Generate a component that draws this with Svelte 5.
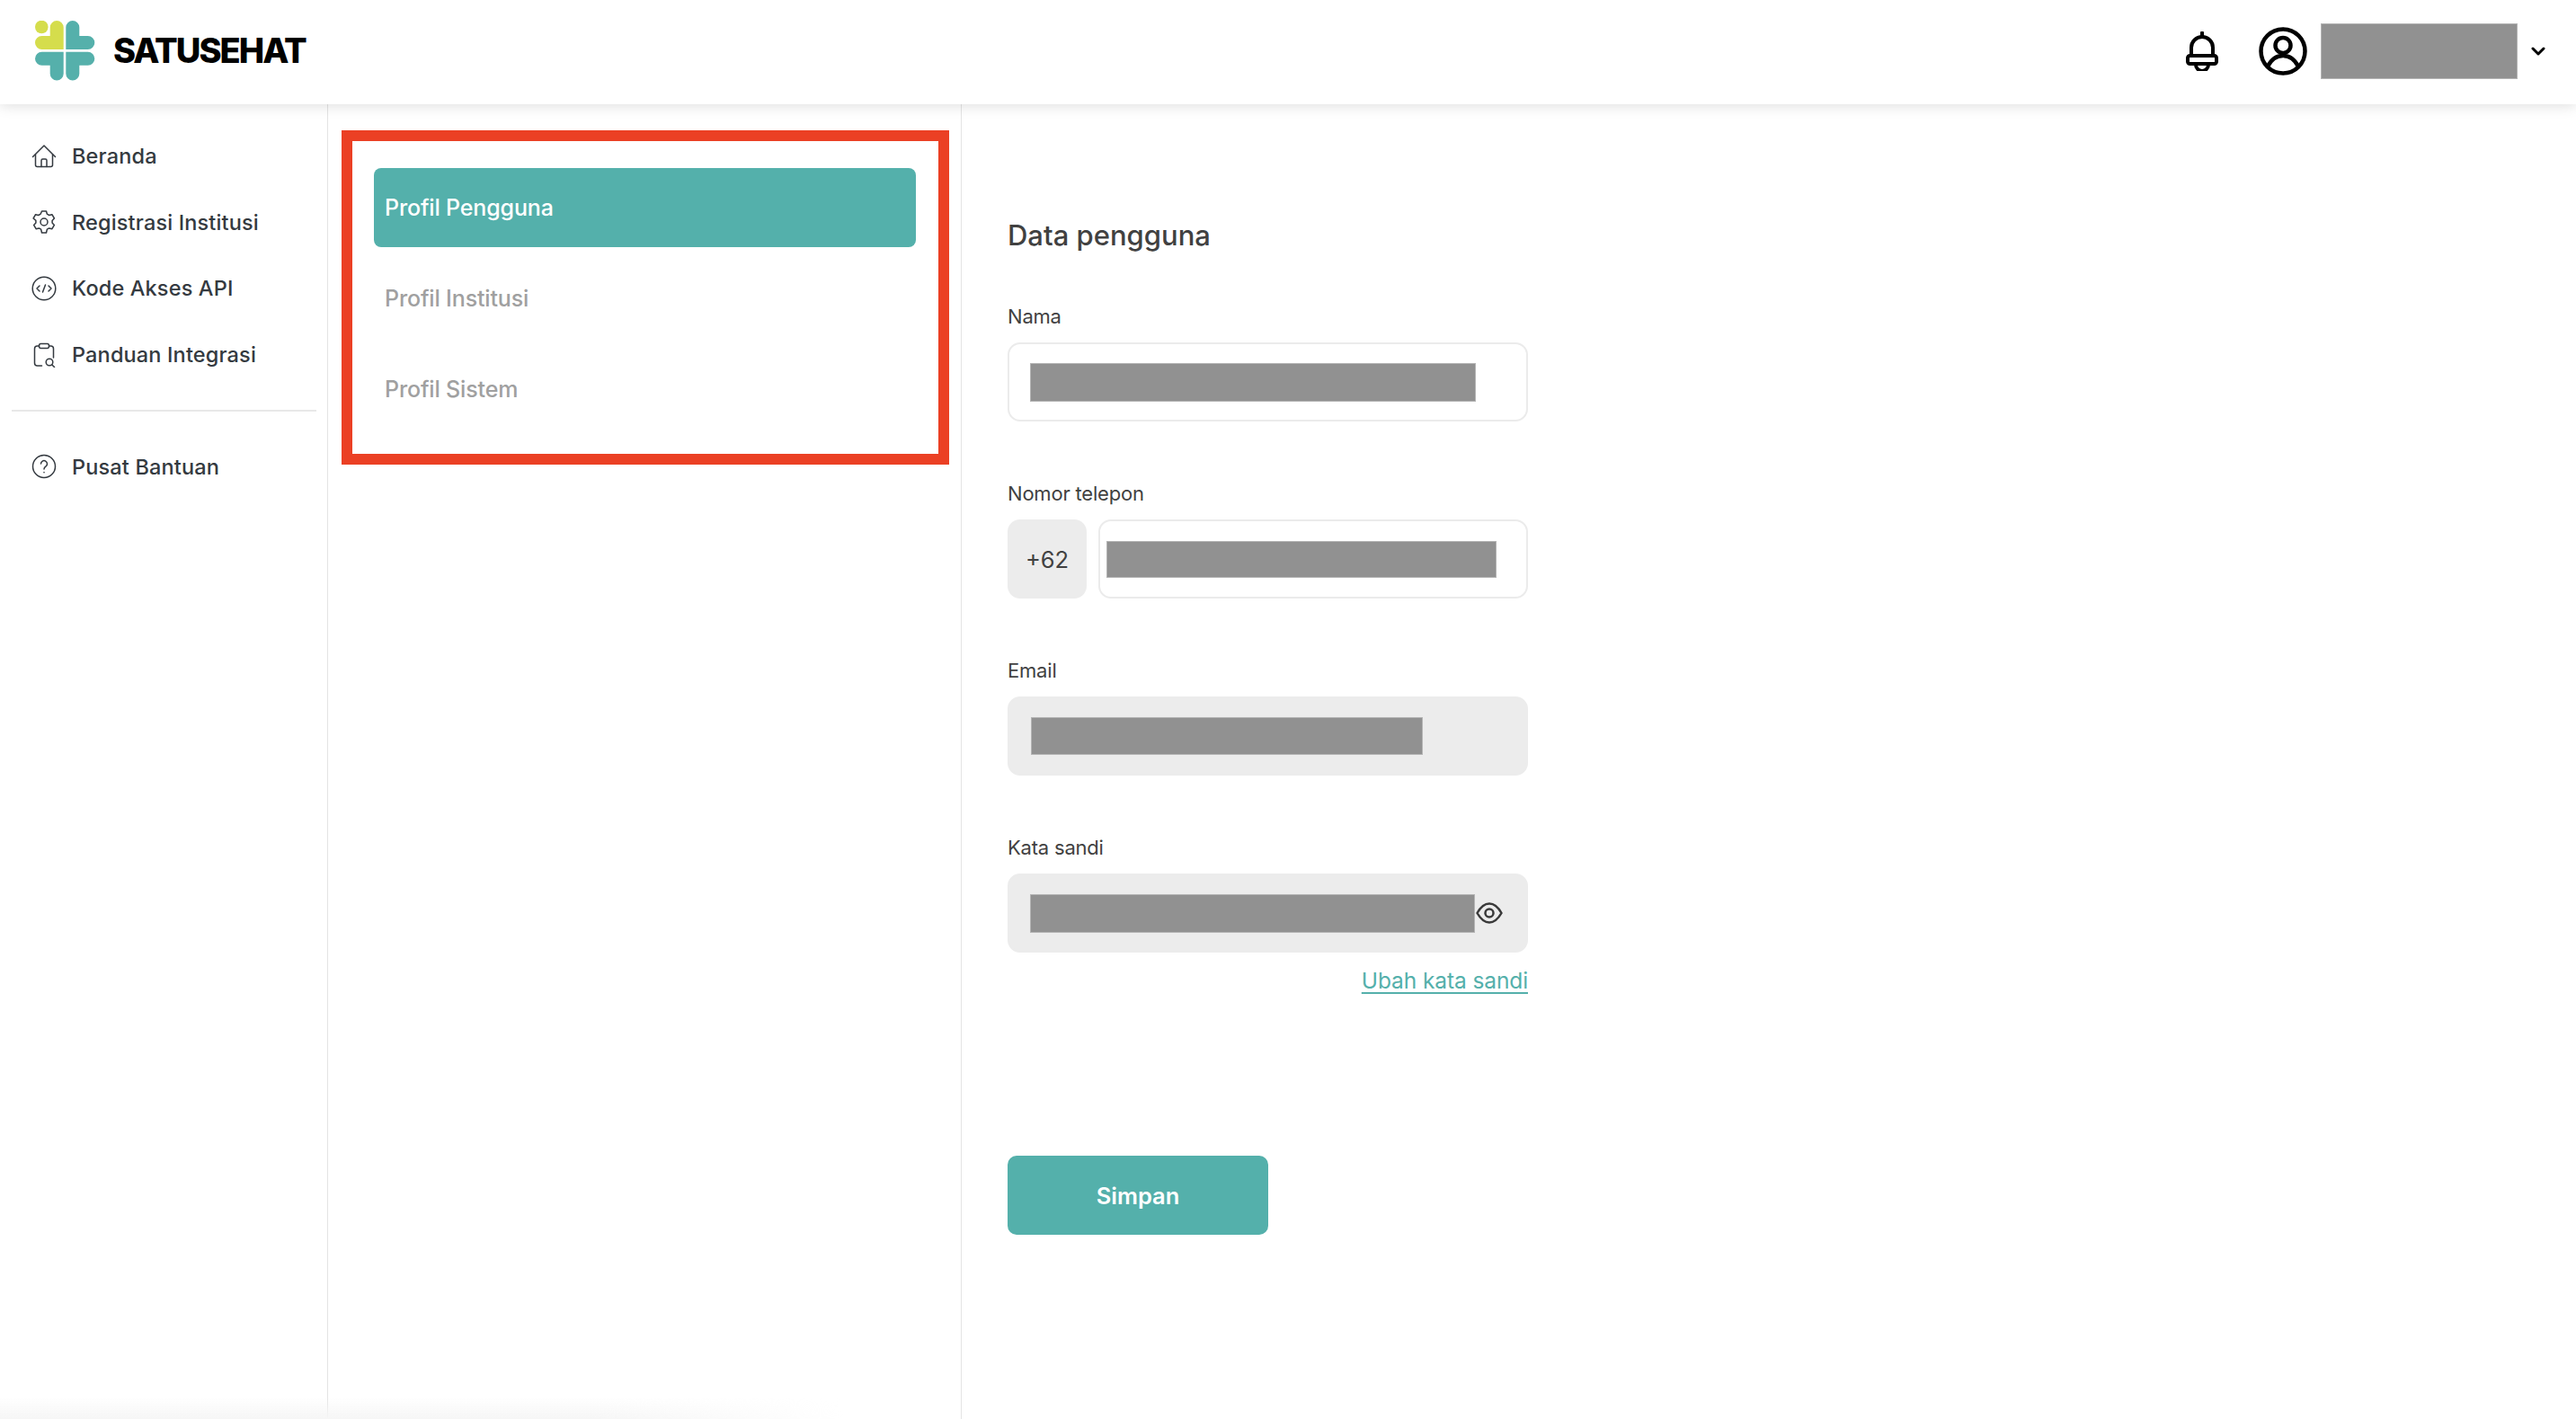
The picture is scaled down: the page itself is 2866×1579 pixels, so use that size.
<script>
  const navTop = [
    { label: 'Beranda', icon: 'home' },
    { label: 'Registrasi Institusi', icon: 'gear' },
    { label: 'Kode Akses API', icon: 'code' },
    { label: 'Panduan Integrasi', icon: 'guide' },
  ]
  const tabs = ['Profil Pengguna', 'Profil Institusi', 'Profil Sistem']
</script>

{#snippet navIcon(name)}
  <svg class="nav-icon" viewBox="0 0 28 28" fill="none" stroke="currentColor" stroke-width="1.5" stroke-linecap="round" stroke-linejoin="round">
    {#if name === 'home'}
      <path d="M1.5 14.5 14 2l12.500 12.500" />
      <path d="M4.500 12v11.500a2 2 0 0 0 2 2h15a2 2 0 0 0 2-2V12" />
      <path d="M11 25.500V18.500a1.500 1.500 0 0 1 1.500-1.500h3a1.500 1.500 0 0 1 1.500 1.500v7" />
    {:else if name === 'gear'}
      <path d="M11.500 2h5l.9 3.200 2.300 1.300 3.200-.8 2.500 4.300-2.300 2.400v2.600l2.300 2.400-2.500 4.300-3.200-.8-2.300 1.300-.9 3.800h-5l-.9-3.800-2.300-1.300-3.200.8-2.500-4.300 2.300-2.400v-2.600L2.100 10l2.500-4.300 3.200.8 2.300-1.300z" />
      <circle cx="14" cy="14" r="4" />
    {:else if name === 'code'}
      <circle cx="14" cy="14" r="12.800" />
      <path d="m9 11-3 3 3 3M19 11l3 3-3 3M15.500 10l-3 8" />
    {:else if name === 'guide'}
      <path d="M8.500 4H6.500a3 3 0 0 0-3 3v16a3 3 0 0 0 3 3h5M19.500 4h2a3 3 0 0 1 3 3v10" />
      <rect x="8.500" y="1.500" width="11" height="5" rx="2" />
      <circle cx="20" cy="22" r="3.800" />
      <path d="m23 25 2.500 2.500" />
    {:else}
      <circle cx="14" cy="14" r="12.500" />
      <path d="M10.500 11a3.500 3.500 0 1 1 5.500 3c-1.300.8-2 1.500-2 3" />
      <path d="M14 20.500v.2" />
    {/if}
  </svg>
{/snippet}

<div class="page">
  <header class="topbar">
    <div class="brand">
      <svg class="logo" viewBox="39 23 67 67">
        <circle cx="46.300" cy="30" r="7.300" fill="#d5dd4c" />
        <path fill="#d5dd4c" d="M70.700 55V30.500a7.500 7.500 0 0 0-15 0V40H46.500a7.500 7.500 0 0 0 0 15z" />
        <path fill="#55b0ab" d="M73.300 55V30.500a7.500 7.500 0 0 1 15 0V40h9.500a7.500 7.500 0 0 1 0 15z" />
        <path fill="#55b0ab" d="M70.700 57.700H46.500a7.500 7.500 0 0 0 0 15h9.200V82a7.500 7.500 0 0 0 15 0z" />
        <path fill="#55b0ab" d="M73.300 57.700h24.500a7.500 7.500 0 0 1 0 15h-9.500V82a7.500 7.500 0 0 1-15 0z" />
      </svg>
      <span class="brand-name">SATUSEHAT</span>
    </div>
    <div class="account">
      <svg class="bell" viewBox="0 0 36 44" fill="none" stroke="#000" stroke-width="4" stroke-linecap="round" stroke-linejoin="round">
        <path d="M18 1.500v3" />
        <path d="M6 27v-9a12 12 0 0 1 24 0v9" />
        <rect x="2" y="27" width="32" height="9" rx="2.500" />
        <path d="M11 37a7 7 0 0 0 14 0" />
      </svg>
      <svg class="user" viewBox="0 0 54 54" fill="none" stroke="#000" stroke-width="4.500" stroke-linecap="round">
        <circle cx="27" cy="27" r="24.500" />
        <circle cx="27" cy="20.500" r="8.500" />
        <path d="M10 44c4-8 10-12 17-12s13 4 17 12" />
      </svg>
      <div class="redact name"></div>
      <svg class="chevron" viewBox="0 0 16 10" fill="none" stroke="#000" stroke-width="3" stroke-linecap="round" stroke-linejoin="round">
        <path d="m2 2 6 6 6-6" />
      </svg>
    </div>
  </header>

  <div class="body">
    <aside class="sidebar">
      <nav>
        {#each navTop as item}
          <div class="nav-item">
            {@render navIcon(item.icon)}
            <span>{item.label}</span>
          </div>
        {/each}
      </nav>
      <div class="divider"></div>
      <div class="nav-item">
        {@render navIcon('help')}
        <span>Pusat Bantuan</span>
      </div>
    </aside>

    <section class="tabs-col">
      <div class="tabs-box">
        {#each tabs as tab, i}
          <div class="tab" class:active={i === 0}>{tab}</div>
        {/each}
      </div>
    </section>

    <main class="form">
      <h1>Data pengguna</h1>

      <div class="group">
        <div class="label">Nama</div>
        <div class="field">
          <div class="redact r-nama"></div>
        </div>
      </div>

      <div class="group">
        <div class="label">Nomor telepon</div>
        <div class="phone">
          <div class="prefix">+62</div>
          <div class="field phone-field">
            <div class="redact r-phone"></div>
          </div>
        </div>
      </div>

      <div class="group">
        <div class="label">Email</div>
        <div class="field disabled email-field">
          <div class="redact r-email"></div>
        </div>
      </div>

      <div class="group">
        <div class="label">Kata sandi</div>
        <div class="field disabled">
          <div class="redact r-pass"></div>
          <svg class="eye" viewBox="0 0 30 24" fill="none" stroke="#3a3a3a" stroke-width="2.500" stroke-linejoin="round">
            <path d="M1.500 12C6 4 10 1.500 15 1.500S24 4 28.500 12C24 20 20 22.500 15 22.500S6 20 1.500 12z" />
            <circle cx="15" cy="12" r="4.500" />
          </svg>
        </div>
        <div class="link-row"><span class="link">Ubah kata sandi</span></div>
      </div>

      <button class="save" type="button">Simpan</button>
    </main>
  </div>

  <div class="bottom-fade"></div>
</div>

<style>
  :global(body) {
    margin: 0;
    background: #fff;
  }

  .page {
    position: relative;
    width: 2866px;
    height: 1579px;
    overflow: hidden;
    display: flex;
    flex-direction: column;
    font-family: Inter, "Open Sans", sans-serif;
    color: #414141;
  }

  .topbar {
    position: relative;
    z-index: 2;
    flex: none;
    height: 116px;
    box-sizing: border-box;
    padding: 0 34px 0 39px;
    display: flex;
    align-items: center;
    justify-content: space-between;
    background: #fff;
    box-shadow: 0 2px 14px rgba(0, 0, 0, 0.13);
  }

  .brand {
    display: flex;
    align-items: center;
    gap: 20px;
    margin-top: -4px;
  }

  .logo {
    width: 67px;
    height: 67px;
  }

  .brand-name {
    font-size: 38px;
    font-weight: 800;
    letter-spacing: -2px;
    color: #000;
  }

  .account {
    display: flex;
    align-items: center;
    margin-top: -2px;
  }

  .bell {
    width: 36px;
    height: 44px;
    margin-right: 45px;
  }

  .user {
    width: 54px;
    height: 54px;
    margin-right: 15px;
  }

  .redact {
    flex: none;
    background: #919191;
    box-sizing: border-box;
    border: 1px solid #b4b4b4;
  }

  .name {
    width: 219px;
    height: 62px;
    margin-right: 15px;
  }

  .chevron {
    width: 16px;
    height: 10px;
  }

  .body {
    flex: 1;
    display: flex;
    min-height: 0;
  }

  .sidebar {
    flex: none;
    width: 365px;
    box-sizing: border-box;
    padding-top: 21px;
    border-right: 1px solid #e4e4e4;
  }

  .nav-item {
    height: 73.6px;
    padding-left: 35px;
    display: flex;
    align-items: center;
    gap: 17px;
    font-size: 23.5px;
    font-weight: 500;
    letter-spacing: 0.15px;
    color: #343a40;
  }

  .nav-icon {
    flex: none;
    width: 28px;
    height: 28px;
  }

  .divider {
    height: 2px;
    margin: 25px 12px 24px 13px;
    background: #e8e8e8;
  }

  .tabs-col {
    flex: none;
    width: 705px;
    box-sizing: border-box;
    padding: 29px 0 0 15px;
    border-right: 1px solid #e4e4e4;
  }

  .tabs-box {
    box-sizing: border-box;
    width: 676px;
    height: 372px;
    padding: 30px 25px 0 24px;
    border: 12px solid #eb4024;
    display: flex;
    flex-direction: column;
    gap: 13px;
  }

  .tab {
    height: 88px;
    padding-left: 12px;
    display: flex;
    align-items: center;
    border-radius: 8px;
    font-size: 25px;
    font-weight: 500;
    letter-spacing: -0.15px;
    color: #a0a0a0;
  }

  .tab.active {
    background: #54b0ab;
    color: #fff;
  }

  .form {
    flex: none;
    width: 579px;
    margin-left: 51px;
    padding-top: 126px;
    display: flex;
    flex-direction: column;
    gap: 63px;
  }

  h1 {
    margin: 0 0 -10px;
    height: 40px;
    line-height: 40px;
    font-size: 31px;
    font-weight: 500;
    color: #414141;
  }

  .label {
    height: 34px;
    line-height: 34px;
    margin-bottom: 12px;
    font-size: 22px;
    letter-spacing: -0.2px;
    color: #414141;
  }

  .field {
    box-sizing: border-box;
    height: 88px;
    padding-left: 23px;
    display: flex;
    align-items: center;
    border: 2px solid #ebebeb;
    border-radius: 14px;
  }

  .field.disabled {
    background: #ececec;
    border-color: #ececec;
  }

  .email-field {
    padding-left: 24px;
  }

  .phone {
    display: flex;
    gap: 13px;
  }

  .prefix {
    flex: none;
    width: 88px;
    height: 88px;
    display: flex;
    align-items: center;
    justify-content: center;
    border-radius: 14px;
    background: #ececec;
    font-size: 25.5px;
  }

  .phone-field {
    flex: 1;
    padding-left: 7px;
  }

  .r-nama {
    width: 496px;
    height: 43px;
  }

  .r-phone {
    width: 434px;
    height: 41px;
  }

  .r-email {
    width: 436px;
    height: 42px;
  }

  .r-pass {
    width: 495px;
    height: 43px;
  }

  .eye {
    width: 30px;
    height: 24px;
    margin-left: 1px;
  }

  .link-row {
    margin-top: 14px;
    height: 34px;
    line-height: 34px;
    text-align: right;
  }

  .link {
    font-size: 24.5px;
    letter-spacing: -0.1px;
    color: #54b0ab;
    text-decoration: underline;
    text-underline-offset: 4px;
  }

  .save {
    width: 290px;
    height: 88px;
    margin-top: 115px;
    border: none;
    border-radius: 10px;
    background: #54b0ab;
    color: #fff;
    font-family: inherit;
    font-size: 25.5px;
    font-weight: 600;
  }

  .bottom-fade {
    position: absolute;
    left: 0;
    bottom: 0;
    width: 940px;
    height: 24px;
    background: linear-gradient(to top, #f6f6f6, rgba(246, 246, 246, 0));
    -webkit-mask-image: linear-gradient(to right, #000 70%, transparent);
    mask-image: linear-gradient(to right, #000 70%, transparent);
  }
</style>
